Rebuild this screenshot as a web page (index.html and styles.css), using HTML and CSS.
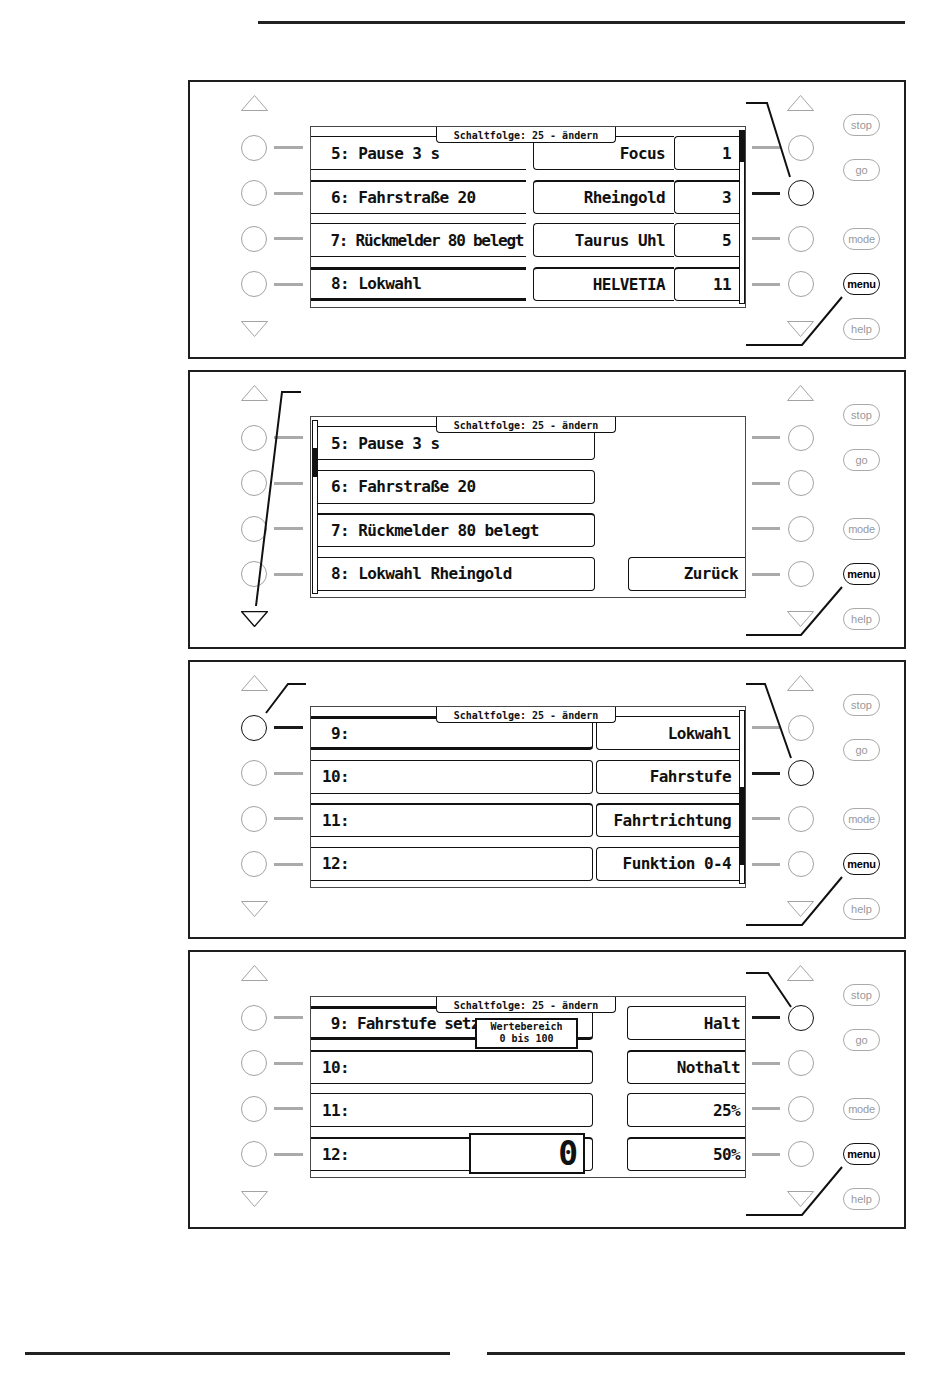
FILE: index.html
```html
<!DOCTYPE html>
<html lang="de">
    <head>
        <meta charset="UTF-8" />
        <title>Schaltfolge ändern</title>
        <link rel="stylesheet" href="styles.css">
    </head>
    <body>
        <div class="rule-top"></div>

        <main class="panels">
            <!-- 1: Lok im Schritt 8 auswählen -->
            <section class="panel">
                <div class="keys keys-left">
                    <svg class="tri" viewBox="0 0 27 16"><polygon points="0.5,15.5 13.5,0.5 26.5,15.5"/></svg>
                    <div class="key"><span class="knob"></span><span class="dash"></span></div>
                    <div class="key"><span class="knob"></span><span class="dash"></span></div>
                    <div class="key"><span class="knob"></span><span class="dash"></span></div>
                    <div class="key"><span class="knob"></span><span class="dash"></span></div>
                    <svg class="tri down" viewBox="0 0 27 16"><polygon points="0.5,0.5 26.5,0.5 13.5,15.5"/></svg>
                </div>
                <div class="lcd">
                    <div class="tab">Schaltfolge: 25 - ändern</div>
                    <div class="rows p1">
                        <div class="row">
                            <div class="cell name"> 5: Pause 3 s</div>
                            <div class="cell lb loco">Focus</div>
                            <div class="cell lb num">1</div>
                        </div>
                        <div class="row">
                            <div class="cell name t2"> 6: Fahrstraße 20</div>
                            <div class="cell lb loco t2">Rheingold</div>
                            <div class="cell lb num t2">3</div>
                        </div>
                        <div class="row">
                            <div class="cell name"><span class="fit"> 7: Rückmelder 80 belegt</span></div>
                            <div class="cell lb loco">Taurus Uhl</div>
                            <div class="cell lb num">5</div>
                        </div>
                        <div class="row">
                            <div class="cell name t3 b3"> 8: Lokwahl</div>
                            <div class="cell lb loco t2">HELVETIA</div>
                            <div class="cell lb num t2">11</div>
                        </div>
                    </div>
                    <div class="scroll"><div class="thumb" style="height:31px"></div></div>
                </div>
                <div class="keys keys-right">
                    <svg class="tri" viewBox="0 0 27 16"><polygon points="0.5,15.5 13.5,0.5 26.5,15.5"/></svg>
                    <div class="key"><span class="dash"></span><span class="knob"></span></div>
                    <div class="key"><span class="dash on"></span><span class="knob on"></span></div>
                    <div class="key"><span class="dash"></span><span class="knob"></span></div>
                    <div class="key"><span class="dash"></span><span class="knob"></span></div>
                    <svg class="tri down" viewBox="0 0 27 16"><polygon points="0.5,0.5 26.5,0.5 13.5,15.5"/></svg>
                </div>
                <div class="pills">
                    <span class="pill">stop</span>
                    <span class="pill">go</span>
                    <span class="pill mode">mode</span>
                    <span class="pill menu">menu</span>
                    <span class="pill">help</span>
                </div>
                <svg class="callouts" viewBox="0 0 718 279">
                    <polyline points="558,23 579,23 602,97"/>
                    <polyline points="558,265 614,265 654,217"/>
                </svg>
            </section>

            <!-- 2: Zeile 8 übernommen -->
            <section class="panel">
                <div class="keys keys-left">
                    <svg class="tri" viewBox="0 0 27 16"><polygon points="0.5,15.5 13.5,0.5 26.5,15.5"/></svg>
                    <div class="key"><span class="knob"></span><span class="dash"></span></div>
                    <div class="key"><span class="knob"></span><span class="dash"></span></div>
                    <div class="key"><span class="knob"></span><span class="dash"></span></div>
                    <div class="key"><span class="knob"></span><span class="dash"></span></div>
                    <svg class="tri down on" viewBox="0 0 27 16"><polygon points="0.5,0.5 26.5,0.5 13.5,15.5"/></svg>
                </div>
                <div class="lcd">
                    <div class="tab">Schaltfolge: 25 - ändern</div>
                    <div class="scroll left"><div class="thumb" style="margin-top:27px;height:29px"></div></div>
                    <div class="rows p2">
                        <div class="row">
                            <div class="cell name rb"> 5: Pause 3 s</div>
                        </div>
                        <div class="row">
                            <div class="cell name rb"> 6: Fahrstraße 20</div>
                        </div>
                        <div class="row">
                            <div class="cell name rb t2"> 7: Rückmelder 80 belegt</div>
                        </div>
                        <div class="row">
                            <div class="cell name rb"> 8: Lokwahl Rheingold</div>
                            <div class="cell lb back">Zurück</div>
                        </div>
                    </div>
                </div>
                <div class="keys keys-right">
                    <svg class="tri" viewBox="0 0 27 16"><polygon points="0.5,15.5 13.5,0.5 26.5,15.5"/></svg>
                    <div class="key"><span class="dash"></span><span class="knob"></span></div>
                    <div class="key"><span class="dash"></span><span class="knob"></span></div>
                    <div class="key"><span class="dash"></span><span class="knob"></span></div>
                    <div class="key"><span class="dash"></span><span class="knob"></span></div>
                    <svg class="tri down" viewBox="0 0 27 16"><polygon points="0.5,0.5 26.5,0.5 13.5,15.5"/></svg>
                </div>
                <div class="pills">
                    <span class="pill">stop</span>
                    <span class="pill">go</span>
                    <span class="pill mode">mode</span>
                    <span class="pill menu">menu</span>
                    <span class="pill">help</span>
                </div>
                <svg class="callouts" viewBox="0 0 718 279">
                    <polyline points="113,22 94,22 68,236"/>
                    <polyline points="558,265 613,265 654,217"/>
                </svg>
            </section>

            <!-- 3: neuer Schritt 9, Aktion wählen -->
            <section class="panel">
                <div class="keys keys-left">
                    <svg class="tri" viewBox="0 0 27 16"><polygon points="0.5,15.5 13.5,0.5 26.5,15.5"/></svg>
                    <div class="key"><span class="knob on"></span><span class="dash on"></span></div>
                    <div class="key"><span class="knob"></span><span class="dash"></span></div>
                    <div class="key"><span class="knob"></span><span class="dash"></span></div>
                    <div class="key"><span class="knob"></span><span class="dash"></span></div>
                    <svg class="tri down" viewBox="0 0 27 16"><polygon points="0.5,0.5 26.5,0.5 13.5,15.5"/></svg>
                </div>
                <div class="lcd">
                    <div class="tab">Schaltfolge: 25 - ändern</div>
                    <div class="rows p3">
                        <div class="row">
                            <div class="cell name rb t3 r3 b3"> 9:</div>
                            <div class="cell lb action">Lokwahl</div>
                        </div>
                        <div class="row">
                            <div class="cell name rb">10:</div>
                            <div class="cell lb action">Fahrstufe</div>
                        </div>
                        <div class="row">
                            <div class="cell name rb t2">11:</div>
                            <div class="cell lb action t2">Fahrtrichtung</div>
                        </div>
                        <div class="row">
                            <div class="cell name rb">12:</div>
                            <div class="cell lb action">Funktion 0-4</div>
                        </div>
                    </div>
                    <div class="scroll"><div class="thumb" style="margin-top:76px;height:78px"></div></div>
                </div>
                <div class="keys keys-right">
                    <svg class="tri" viewBox="0 0 27 16"><polygon points="0.5,15.5 13.5,0.5 26.5,15.5"/></svg>
                    <div class="key"><span class="dash"></span><span class="knob"></span></div>
                    <div class="key"><span class="dash on"></span><span class="knob on"></span></div>
                    <div class="key"><span class="dash"></span><span class="knob"></span></div>
                    <div class="key"><span class="dash"></span><span class="knob"></span></div>
                    <svg class="tri down" viewBox="0 0 27 16"><polygon points="0.5,0.5 26.5,0.5 13.5,15.5"/></svg>
                </div>
                <div class="pills">
                    <span class="pill">stop</span>
                    <span class="pill">go</span>
                    <span class="pill mode">mode</span>
                    <span class="pill menu">menu</span>
                    <span class="pill">help</span>
                </div>
                <svg class="callouts" viewBox="0 0 718 279">
                    <polyline points="118,24 100,24 78,53"/>
                    <polyline points="558,24 577,24 603,98"/>
                    <polyline points="558,265 614,265 654,217"/>
                </svg>
            </section>

            <!-- 4: Fahrstufe eingeben -->
            <section class="panel">
                <div class="keys keys-left">
                    <svg class="tri" viewBox="0 0 27 16"><polygon points="0.5,15.5 13.5,0.5 26.5,15.5"/></svg>
                    <div class="key"><span class="knob"></span><span class="dash"></span></div>
                    <div class="key"><span class="knob"></span><span class="dash"></span></div>
                    <div class="key"><span class="knob"></span><span class="dash"></span></div>
                    <div class="key"><span class="knob"></span><span class="dash"></span></div>
                    <svg class="tri down" viewBox="0 0 27 16"><polygon points="0.5,0.5 26.5,0.5 13.5,15.5"/></svg>
                </div>
                <div class="lcd">
                    <div class="tab">Schaltfolge: 25 - ändern</div>
                    <div class="rows p4">
                        <div class="row">
                            <div class="cell name rb t3 r3 b3"><span class="under"> 9: Fahrstufe setz</span></div>
                            <div class="cell lb speed">Halt</div>
                        </div>
                        <div class="row">
                            <div class="cell name rb t2">10:</div>
                            <div class="cell lb speed t2">Nothalt</div>
                        </div>
                        <div class="row">
                            <div class="cell name rb">11:</div>
                            <div class="cell lb speed">25%</div>
                        </div>
                        <div class="row">
                            <div class="cell name rb t2">12:</div>
                            <div class="cell lb speed t2">50%</div>
                        </div>
                    </div>
                    <div class="hint">Wertebereich<br>0 bis 100</div>
                    <div class="entry">0</div>
                </div>
                <div class="keys keys-right">
                    <svg class="tri" viewBox="0 0 27 16"><polygon points="0.5,15.5 13.5,0.5 26.5,15.5"/></svg>
                    <div class="key"><span class="dash on"></span><span class="knob on"></span></div>
                    <div class="key"><span class="dash"></span><span class="knob"></span></div>
                    <div class="key"><span class="dash"></span><span class="knob"></span></div>
                    <div class="key"><span class="dash"></span><span class="knob"></span></div>
                    <svg class="tri down" viewBox="0 0 27 16"><polygon points="0.5,0.5 26.5,0.5 13.5,15.5"/></svg>
                </div>
                <div class="pills">
                    <span class="pill">stop</span>
                    <span class="pill">go</span>
                    <span class="pill mode">mode</span>
                    <span class="pill menu">menu</span>
                    <span class="pill">help</span>
                </div>
                <svg class="callouts" viewBox="0 0 718 279">
                    <polyline points="558,23 580,23 603,57"/>
                    <polyline points="558,265 614,265 654,217"/>
                </svg>
            </section>
        </main>

        <footer class="rule-bottom">
            <span class="l"></span>
            <span class="r"></span>
        </footer>
    </body>
</html>
```

FILE: styles.css
```css
* {
    margin: 0;
    padding: 0;
    box-sizing: border-box;
}
body {
    background: #fff;
    color: #111;
    font-family: "Liberation Sans", Arial, sans-serif;
}

/* Seitenlinien */
.rule-top {
    margin: 21px 0 0 258px;
    width: 647px;
    height: 3px;
    background: #222;
}
.rule-bottom {
    display: flex;
    margin-top: 123px;
}
.rule-bottom span {
    height: 3px;
    background: #222;
}
.rule-bottom .l {
    margin-left: 25px;
    width: 425px;
}
.rule-bottom .r {
    margin-left: 37px;
    width: 418px;
}

/* Geräteansicht */
.panels {
    margin: 56px 0 0 188px;
    width: 718px;
    display: flex;
    flex-direction: column;
    gap: 11px;
}
.panel {
    position: relative;
    height: 279px;
    border: 2px solid #1e1e1e;
    display: flex;
    align-items: flex-start;
    padding-left: 51px;
}

/* Tasten links / rechts */
.keys {
    width: 62px;
    display: flex;
    flex-direction: column;
    gap: 19.4px;
    padding-top: 13px;
}
.keys-right {
    margin-left: 6px;
    align-items: flex-end;
}
.tri {
    display: block;
    width: 27px;
    height: 16px;
    margin-bottom: 4.6px;
}
.tri.down {
    margin: 4.6px 0 0;
}
.tri polygon {
    fill: none;
    stroke: #a3a3a3;
    stroke-width: 1;
}
.tri.on polygon {
    stroke: #111;
    stroke-width: 1.4;
}
.key {
    display: flex;
    align-items: center;
    height: 26px;
    gap: 7px;
}
.keys-right .key {
    gap: 8px;
}
.knob {
    width: 26px;
    height: 26px;
    border: 1px solid #a2a2a2;
    border-radius: 50%;
}
.knob.on {
    border: 1.5px solid #111;
}
.dash {
    width: 29px;
    height: 3px;
    background: #aaa;
}
.keys-right .dash {
    width: 28px;
}
.dash.on {
    background: #1a1a1a;
}

.pills {
    margin-left: 29px;
    padding-top: 31.5px;
    display: flex;
    flex-direction: column;
    gap: 23px;
}
.pill {
    width: 37px;
    height: 22px;
    border: 1px solid #aaa;
    border-radius: 11px;
    color: #999;
    font-size: 11px;
    display: flex;
    align-items: center;
    justify-content: center;
}
.pill.mode {
    margin-top: 24px;
    letter-spacing: -0.2px;
}
.pill.menu {
    border: 1.5px solid #111;
    color: #000;
    font-size: 11px;
    font-weight: bold;
    letter-spacing: -0.2px;
}

.callouts {
    position: absolute;
    top: -2px;
    left: -2px;
    width: 718px;
    height: 279px;
    pointer-events: none;
}
.callouts polyline {
    fill: none;
    stroke: #111;
    stroke-width: 2;
}

/* LCD */
.lcd {
    position: relative;
    margin: 44px 0 0 7px;
    width: 436px;
    height: 182px;
    border: 1px solid #474747;
    display: flex;
    font-family: "DejaVu Sans Mono", "Liberation Mono", monospace;
    font-weight: bold;
    color: #111;
}
.tab {
    position: absolute;
    top: 0;
    left: 125px;
    width: 180px;
    height: 16px;
    background: #fff;
    border: 1px solid #111;
    border-top: 0;
    border-radius: 0 0 4px 4px;
    font-size: 10px;
    line-height: 15px;
    padding-top: 1px;
    text-align: center;
    z-index: 1;
}
.rows {
    flex: 1;
    display: flex;
    flex-direction: column;
    gap: 9.5px;
    padding-top: 9px;
}
.row {
    display: flex;
    height: 34px;
}
.cell {
    display: flex;
    align-items: center;
    border-top: 1px solid #111;
    border-bottom: 1px solid #111;
    font-size: 16px;
    letter-spacing: -0.6px;
    white-space: pre;
    overflow: hidden;
}
.cell.lb {
    border-left: 1px solid #111;
    border-radius: 4px 0 0 4px;
    justify-content: flex-end;
}
.cell.rb {
    border-right: 1px solid #111;
    border-radius: 0 4px 4px 0;
}
.t2 { border-top-width: 2px; }
.t3 { border-top-width: 3px; }
.b3 { border-bottom-width: 3px; }
.r3 { border-right-width: 3px; }

.name {
    padding-left: 11px;
}
.p1 .name { width: 215px; }
.p1 .loco {
    width: 141px;
    margin-left: 7px;
    padding-right: 9px;
}
.p1 .num {
    flex: 1;
    padding-right: 8px;
}
.p2 .name {
    width: 277px;
    padding-left: 4px;
}
.p2 .back {
    flex: 1;
    margin-left: 33px;
    padding-right: 7px;
}
.p3 .name,
.p4 .name { width: 282px; }
.p3 .action {
    flex: 1;
    margin-left: 3px;
    padding-right: 8px;
}
.p4 .speed {
    flex: 1;
    margin-left: 34px;
    padding-right: 5px;
}
.under {
    letter-spacing: -0.9px;
}
.fit {
    letter-spacing: -1.25px;
}

.scroll {
    width: 6px;
    margin: 3px 0;
    border: 1px solid #111;
}
.scroll.left {
    margin-left: 1px;
}
.thumb {
    background: #111;
}

.hint {
    position: absolute;
    left: 164px;
    top: 21px;
    width: 103px;
    height: 31px;
    border: 2px solid #111;
    background: #fff;
    font-size: 10px;
    line-height: 12px;
    padding-top: 1px;
    text-align: center;
}
.entry {
    position: absolute;
    left: 158px;
    top: 136px;
    width: 116px;
    height: 41px;
    border: 2px solid #111;
    background: #fff;
    font-size: 33px;
    line-height: 37px;
    text-align: right;
    padding-right: 5px;
}
```
